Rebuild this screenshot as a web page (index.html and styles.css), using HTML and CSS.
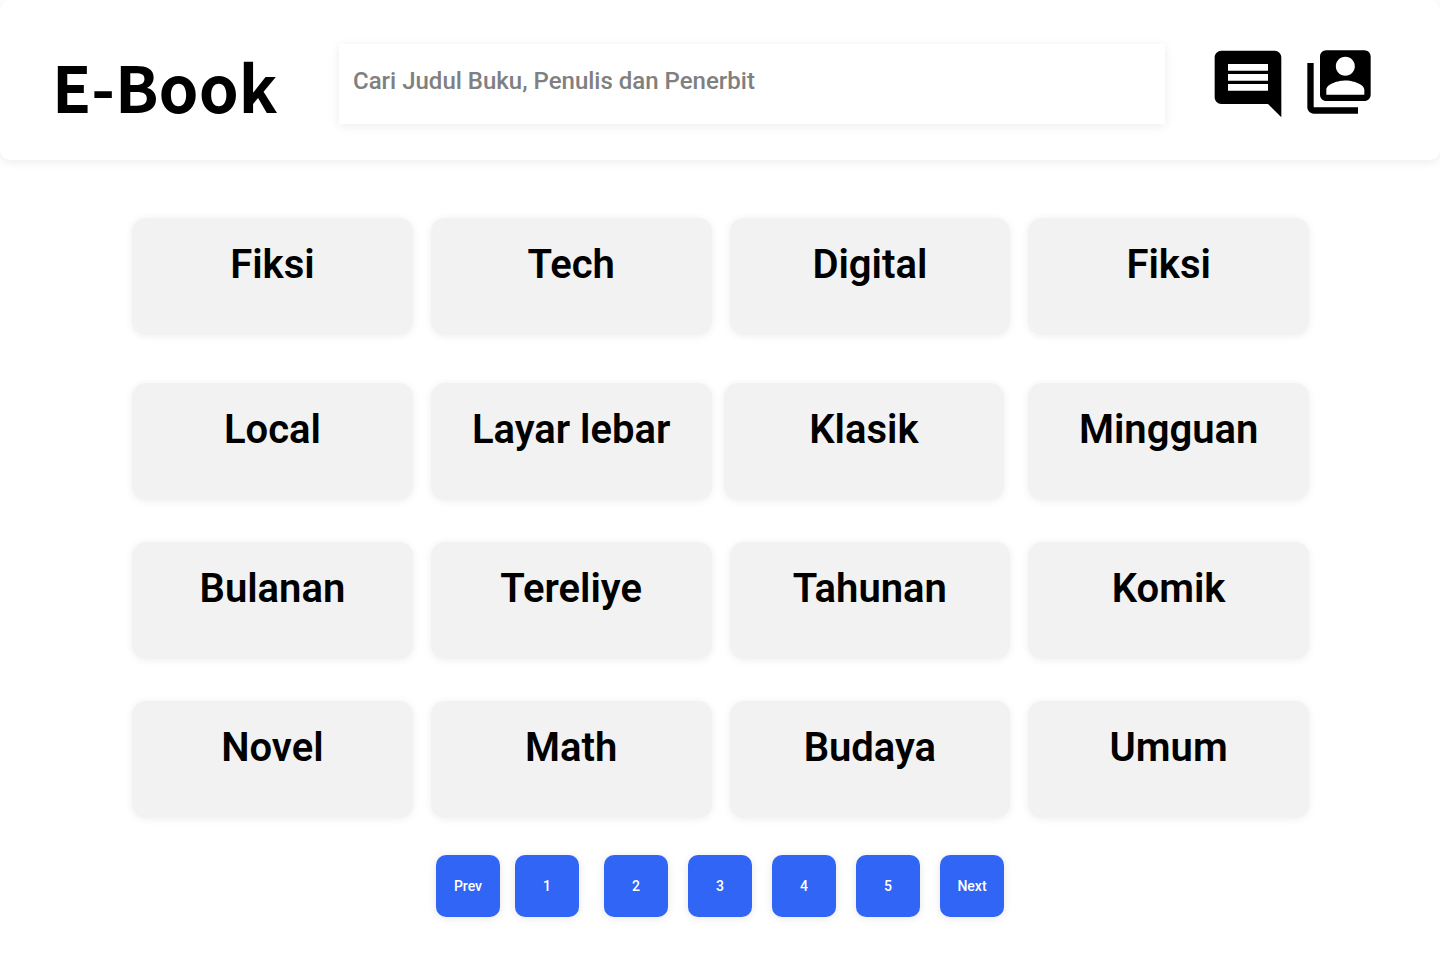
FILE: index.html
```html
<!DOCTYPE html>
<html lang="id">
<head>
<meta charset="utf-8">
<meta name="viewport" content="width=device-width, initial-scale=1">
<title>E-Book</title>
<link rel="stylesheet" href="styles.css">
</head>
<body>
<header class="header">
  <h1 class="logo">E-Book</h1>
  <input class="search" type="search" aria-label="Cari buku" placeholder="Cari Judul Buku, Penulis dan Penerbit">
  <div class="actions">
    <button class="icon-button" type="button" aria-label="Pesan">
      <svg width="80" height="80" viewBox="0 0 24 24"><path d="M21.99 4c0-1.1-.89-2-1.99-2H4c-1.1 0-2 .9-2 2v12c0 1.1.9 2 2 2h14l4 4-.01-18zM18 14H6v-2h12v2zm0-3H6V9h12v2zm0-3H6V6h12v2z"/></svg>
    </button>
    <button class="icon-button" type="button" aria-label="Akun">
      <svg width="76" height="76" viewBox="0 0 24 24"><path d="M4 6H2v14c0 1.1.9 2 2 2h14v-2H4V6zm16-4H8c-1.1 0-2 .9-2 2v12c0 1.1.9 2 2 2h12c1.1 0 2-.9 2-2V4c0-1.1-.9-2-2-2zm-6 2c1.66 0 3 1.34 3 3s-1.34 3-3 3-3-1.34-3-3 1.34-3 3-3zm6 12H8v-1.5c0-1.99 4-3 6-3s6 1.01 6 3V16z"/></svg>
    </button>
  </div>
</header>
<main class="main">
  <div class="categories">
    <a class="card" href="#">Fiksi</a>
    <a class="card" href="#">Tech</a>
    <a class="card" href="#">Digital</a>
    <a class="card" href="#">Fiksi</a>
  </div>
  <div class="categories categories-spaced">
    <a class="card" href="#">Local</a>
    <a class="card" href="#">Layar lebar</a>
    <a class="card card-near" href="#">Klasik</a>
    <a class="card" href="#">Mingguan</a>
  </div>
  <div class="categories">
    <a class="card" href="#">Bulanan</a>
    <a class="card" href="#">Tereliye</a>
    <a class="card" href="#">Tahunan</a>
    <a class="card" href="#">Komik</a>
  </div>
  <div class="categories">
    <a class="card" href="#">Novel</a>
    <a class="card" href="#">Math</a>
    <a class="card" href="#">Budaya</a>
    <a class="card" href="#">Umum</a>
  </div>
</main>
<nav class="pagination" aria-label="Halaman">
  <div class="page-group page-group-start">
    <button class="page" type="button">Prev</button>
    <button class="page" type="button">1</button>
  </div>
  <div class="page-group">
    <button class="page" type="button">2</button>
    <button class="page" type="button">3</button>
    <button class="page" type="button">4</button>
    <button class="page" type="button">5</button>
    <button class="page" type="button">Next</button>
  </div>
</nav>
</body>
</html>
```
FILE: styles.css
```css
* {
  box-sizing: border-box;
}

body {
  margin: 0;
  background: #fff;
  color: #000;
  font-family: Roboto, "Liberation Sans", sans-serif;
}

.header {
  display: flex;
  align-items: flex-start;
  padding: 44px 63px 34px 52px;
  border-radius: 10px;
  background: #fff;
  box-shadow: 0 2px 10px rgba(0, 0, 0, 0.08);
}

.logo {
  flex: 0 0 287px;
  margin: 0;
  font-family: "Noto Sans CJK JP", "Noto Sans", sans-serif;
  font-size: 64px;
  font-weight: 700;
  line-height: 82px;
}

.search {
  flex: 1;
  min-width: 0;
  height: 80px;
  padding: 0 14px 6px;
  border: 0;
  border-radius: 0;
  outline: 0;
  background: #fff;
  box-shadow: 0 2px 10px rgba(0, 0, 0, 0.08);
  font: 500 24px Roboto, "Liberation Sans", sans-serif;
  appearance: none;
}

.search::placeholder {
  color: #808080;
  opacity: 1;
}

.actions {
  display: flex;
  gap: 13px;
  margin-left: 43px;
}

.icon-button {
  display: flex;
  align-items: flex-start;
  padding: 0;
  border: 0;
  background: none;
  cursor: pointer;
}

.icon-button svg {
  fill: #000;
}

.main {
  display: grid;
  gap: 42px;
  padding: 58px 131px 0 132px;
}

.categories {
  display: grid;
  grid-template-columns: repeat(4, 1fr);
  gap: 18px;
}

.categories-spaced {
  padding-top: 6px;
}

.card {
  height: 117px;
  padding-top: 23px;
  border-radius: 14px;
  background: #f2f2f2;
  box-shadow: 0 1px 8px rgba(0, 0, 0, 0.07);
  color: #000;
  font-size: 40px;
  font-weight: 600;
  line-height: 48px;
  text-align: center;
  text-decoration: none;
}

.card-near {
  margin: 0 6px 0 -6px;
}

.pagination {
  display: flex;
  justify-content: center;
  gap: 25px;
  padding: 37px 0 36px;
}

.page-group {
  display: flex;
  gap: 20px;
}

.page-group-start {
  gap: 15px;
}

.page {
  width: 64px;
  height: 62px;
  padding: 0;
  border: 0;
  border-radius: 10px;
  background: #3065f6;
  box-shadow: 0 1px 8px rgba(0, 0, 0, 0.1);
  color: #fff;
  font: 500 14px Roboto, "Liberation Sans", sans-serif;
  cursor: pointer;
}
```
